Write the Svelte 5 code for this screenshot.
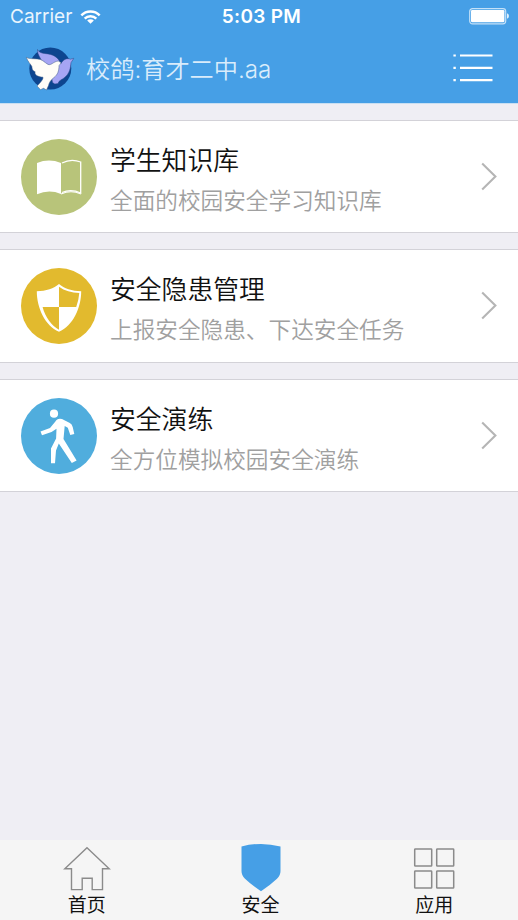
<script>
  const modules = [
    { icon: 'book', color: '#b8c47a', title: '学生知识库', note: '全面的校园安全学习知识库' },
    { icon: 'shield', color: '#e2ba2e', title: '安全隐患管理', note: '上报安全隐患、下达安全任务' },
    { icon: 'walk', color: '#50addd', title: '安全演练', note: '全方位模拟校园安全演练' }
  ];
</script>

<div class="screen">
  <header>
    <div class="status">
      <div class="carrier">
        <span>Carrier</span>
        <svg width="21" height="16" viewBox="0 0 22 16" fill="none" stroke="#fff" stroke-width="2.6">
          <path d="M1.4 6.2a13.4 13.4 0 0 1 19.2 0" />
          <path d="M4.9 9.7a8.5 8.5 0 0 1 12.2 0" />
          <path d="M11 15.2l-3.5-3.5a5 5 0 0 1 7 0z" fill="#fff" stroke="none" />
        </svg>
      </div>
      <div class="time">5:03 PM</div>
      <div class="battery">
        <svg width="41" height="17" viewBox="0 0 41 17">
          <rect x="0.7" y="0.7" width="36" height="15.2" rx="2.8" fill="none" stroke="#c4e1f8" stroke-width="1.2" />
          <rect x="2" y="2" width="33.4" height="12.2" rx="1.2" fill="#fff" />
          <path d="M38 5.3q2 .7 2 2.7t-2 2.7z" fill="#e0f0fc" />
        </svg>
      </div>
    </div>
    <div class="nav">
      <svg class="logo" width="50" height="46" viewBox="0 0 50 46">
        <circle cx="25.3" cy="22.5" r="21" fill="#0d458f" />
        <path d="M12.5 3.5C14 7 18 7.3 23 7.9C30 9 34 12.5 35.8 17.8C38 13.5 42 11.7 45.5 13.2L48.8 12.3L46 16.7C45.5 21.5 45 27.5 39 32C36.5 34 33.5 34.5 33.2 37.5L29.8 38L27.5 36.5L25 23L17 16C16 12 12.2 9 12.5 3.5Z" fill="#a6a5f4" stroke="#294787" stroke-width=".5" />
        <path d="M1.3 11.3C4 13 7 12.5 12 12.9C17 12.8 19.5 16.5 23 18.4C26 19.8 28.5 15.5 33.3 15L36.2 16.7L34 19.7C34 24.5 32.8 28.7 29 31.5C25.5 34.3 24.2 36.5 23.5 39.5L21.5 44L18.5 42.3L15.5 43.7L12 40C15.5 36.5 18.5 33 18 31.2C12.7 31 9 28.5 10.2 25.8C6.8 24.5 7.3 22 6.8 20.3C5.5 18 3 16 1.3 11.3Z" fill="#fffdf8" stroke="#405d84" stroke-width=".5" />
      </svg>
      <h1>校鸽:育才二中.aa</h1>
      <svg class="menu" width="40" height="30" viewBox="0 0 40 30">
        <path d="M7 2.5H39.5M7 14.8H39.5M7 27.2H39.5" stroke="#fff" stroke-width="2.2" />
        <path d="M.4 2.5H2.8M.4 14.8H2.8M.4 27.2H2.8" stroke="#fff" stroke-width="2.2" />
      </svg>
    </div>
  </header>

  <main>
    {#each modules as item}
      <section class="card">
        <svg class="badge" width="76" height="76" viewBox="0 0 76 76">
          <circle cx="38" cy="38" r="38" fill={item.color} />
          {#if item.icon === 'book'}
            <path d="M16 23.9Q28 19 40 23.9V55Q28 49.9 16 55.3Z" fill="#fff" />
            <path d="M41 24Q50 19.2 59.7 23V54Q50 49.7 41 53.5" fill="none" stroke="#fff" stroke-width="1.3" />
            <path d="M40 55Q50 50.5 60 55" fill="none" stroke="#fff" stroke-width="1.2" />
          {:else if item.icon === 'shield'}
            <path d="M38 16C43 20.6 51 23 60.2 23.2C60.2 40 52 57.5 38 63.7C24 57.5 15.8 40 15.8 23.2C25 23 33 20.6 38 16Z" fill="#fff" />
            <path d="M38 18.7C43.5 22.7 50.5 24.7 58.3 25.1Q57.7 32.5 55.2 39H38Z" fill={item.color} />
            <path d="M21.6 39H38V61.7C30.5 57.7 24.5 49.7 21.6 39Z" fill={item.color} />
          {:else}
            <circle cx="33" cy="15.7" r="4.1" fill="#fff" />
            <path d="M34.2 23.8Q36.2 19.8 41 21L48.8 25Q51 26.2 51.7 29L53.3 36L49.3 37L46.8 29.8L43.7 28L42.5 41L55.6 62.6L50.8 65L37.8 45.5L35 52.5L34 65.2H30V50.5L35.1 40.5L35.5 30.7L30.5 34L21 37.2L19.5 33.5L29 30Z" fill="#fff" />
          {/if}
        </svg>
        <div class="copy">
          <h2>{item.title}</h2>
          <p>{item.note}</p>
        </div>
        <svg class="chevron" width="18" height="30" viewBox="0 0 18 30">
          <path d="M2.2 1.5L15.4 14.5L2.2 27.5" fill="none" stroke="#b5b5b5" stroke-width="2.1" />
        </svg>
      </section>
    {/each}
  </main>

  <footer>
    <div class="tab">
      <svg width="50" height="50" viewBox="0 0 50 50" fill="none" stroke="#8b8b8b" stroke-width="1.4">
        <path d="M25 4.8L47.2 25.8H40.5V46.6H30.2V35.3H20.2V46.6H9.5V25.8H2.8Z" />
      </svg>
      <span>首页</span>
    </div>
    <div class="tab">
      <svg width="50" height="50" viewBox="0 0 50 50">
        <path d="M5.5 3.5Q25 -1.7 44.5 3.5V28Q44.5 32.5 41 35.8Q34.5 42 25 48.2Q15.5 42 9 35.8Q5.5 32.5 5.5 28Z" fill="#469fe6" />
      </svg>
      <span>安全</span>
    </div>
    <div class="tab">
      <svg width="50" height="50" viewBox="0 0 50 50" fill="none" stroke="#8b8b8b" stroke-width="1.5">
        <rect x="5.7" y="6" width="17" height="17" rx=".6" />
        <rect x="27.7" y="6" width="17" height="17" rx=".6" />
        <rect x="5.7" y="28" width="17" height="17" rx=".6" />
        <rect x="27.7" y="28" width="17" height="17" rx=".6" />
      </svg>
      <span>应用</span>
    </div>
  </footer>
</div>

<style>
  .screen {
    display: flex;
    flex-direction: column;
    width: 518px;
    height: 920px;
    overflow: hidden;
    background: #efeef4;
    font-family: Inter, "Noto Sans CJK SC", sans-serif;
  }
  svg { display: block; flex: none; }
  h1, h2, p { margin: 0; white-space: nowrap; }
  header {
    height: 103px;
    flex: none;
    background: #469fe6;
    border-bottom: 1px solid #c9dff2;
    color: #fff;
  }
  .status {
    display: grid;
    grid-template-columns: 1fr auto 1fr;
    align-items: center;
    height: 33px;
    padding: 0 8px 0 11px;
  }
  .carrier { display: flex; align-items: center; gap: 8px; font-size: 19px; line-height: 24px; color: #eaf5fd; }
  .carrier span { margin-left: -1px; }
  .time { font-size: 19px; line-height: 24px; font-weight: 600; letter-spacing: .3px; padding: 1px 0 0 2px; }
  .battery { display: flex; justify-content: flex-end; }
  .nav { display: flex; align-items: center; height: 70px; padding: 0 25px 0 25px; }
  .logo { margin-top: 1px; }
  h1 {
    flex: 1;
    margin: 3px 0 0 11px;
    font-size: 24.2px;
    line-height: 36px;
    font-weight: 350;
    color: #d9ecfb;
  }
  main { flex: 1; display: flex; flex-direction: column; gap: 16px; padding-top: 15.8px; }
  .card {
    box-sizing: border-box;
    display: flex;
    align-items: center;
    height: 113.5px;
    flex: none;
    padding: 0 20px 0 21px;
    background: #fff;
    border: solid #d3d2d8;
    border-width: 1px 0;
  }
  .copy { flex: 1; margin-left: 13px; padding-top: 8.5px; }
  h2 { font-size: 25.8px; line-height: 40px; font-weight: 350; color: #111; }
  p { font-size: 22.65px; line-height: 40px; font-weight: 350; color: #a0a0a0; }
  footer { display: flex; width: 521px; height: 80px; flex: none; background: #f5f5f5; }
  .tab { flex: 1; display: flex; flex-direction: column; align-items: center; padding-top: 3px; }
  .tab span { font-size: 19px; line-height: 24px; margin-top: 1px; color: #111; }
</style>
